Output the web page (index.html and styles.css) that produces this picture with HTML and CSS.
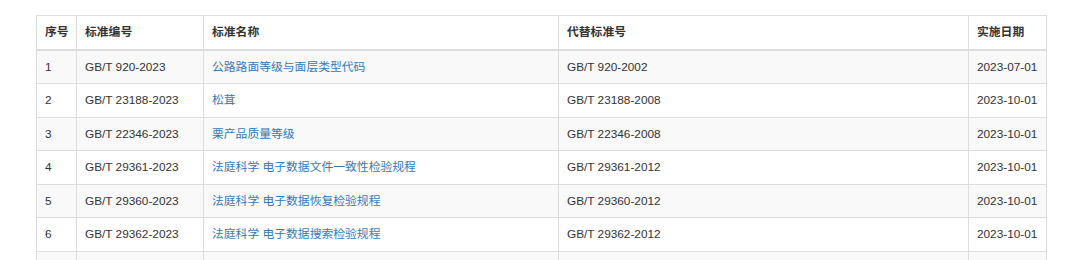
FILE: index.html
```html
<!DOCTYPE html>
<html lang="zh">
<head>
<meta charset="utf-8">
<link rel="stylesheet" href="styles.css">
</head>
<body>
<div class="wrap">
<table class="std">
  <colgroup>
    <col class="c1"><col class="c2"><col class="c3"><col class="c4"><col class="c5">
  </colgroup>
  <thead>
    <tr><th>序号</th><th>标准编号</th><th>标准名称</th><th>代替标准号</th><th>实施日期</th></tr>
  </thead>
  <tbody>
    <tr><td>1</td><td>GB/T 920-2023</td><td><a href="#">公路路面等级与面层类型代码</a></td><td>GB/T 920-2002</td><td>2023-07-01</td></tr>
    <tr><td>2</td><td>GB/T 23188-2023</td><td><a href="#">松茸</a></td><td>GB/T 23188-2008</td><td>2023-10-01</td></tr>
    <tr><td>3</td><td>GB/T 22346-2023</td><td><a href="#">栗产品质量等级</a></td><td>GB/T 22346-2008</td><td>2023-10-01</td></tr>
    <tr><td>4</td><td>GB/T 29361-2023</td><td><a href="#">法庭科学 电子数据文件一致性检验规程</a></td><td>GB/T 29361-2012</td><td>2023-10-01</td></tr>
    <tr><td>5</td><td>GB/T 29360-2023</td><td><a href="#">法庭科学 电子数据恢复检验规程</a></td><td>GB/T 29360-2012</td><td>2023-10-01</td></tr>
    <tr><td>6</td><td>GB/T 29362-2023</td><td><a href="#">法庭科学 电子数据搜索检验规程</a></td><td>GB/T 29362-2012</td><td>2023-10-01</td></tr>
    <tr class="empty"><td></td><td></td><td></td><td></td><td></td></tr>
  </tbody>
</table>
</div>
</body>
</html>
```

FILE: styles.css
```css
html, body {
  margin: 0;
  padding: 0;
  background: #fff;
}
body {
  font-family: "Liberation Sans", Arial, "Noto Sans CJK SC", sans-serif;
  font-size: 11.8px;
  color: #333;
}
.wrap {
  padding: 15px 0 0 36px;
}
.std {
  width: 1010px;
  border-collapse: collapse;
  border-spacing: 0;
  border: 1px solid #ddd;
  table-layout: fixed;
}
.c1 { width: 40px; }
.c2 { width: 127px; }
.c3 { width: 355px; }
.c4 { width: 410px; }
.c5 { width: 78px; }
.std th, .std td {
  border: 1px solid #ddd;
  padding: 8px 8px 8px 8px;
  line-height: 16.5px;
  text-align: left;
  vertical-align: top;
  white-space: nowrap;
}
.std th {
  font-weight: bold;
  border-bottom-width: 2px;
}
.std tbody tr:nth-child(odd) {
  background: #f9f9f9;
}
.std .empty td {
  height: 16.5px;
}
.std a {
  color: #337ab7;
  text-decoration: none;
}
```
